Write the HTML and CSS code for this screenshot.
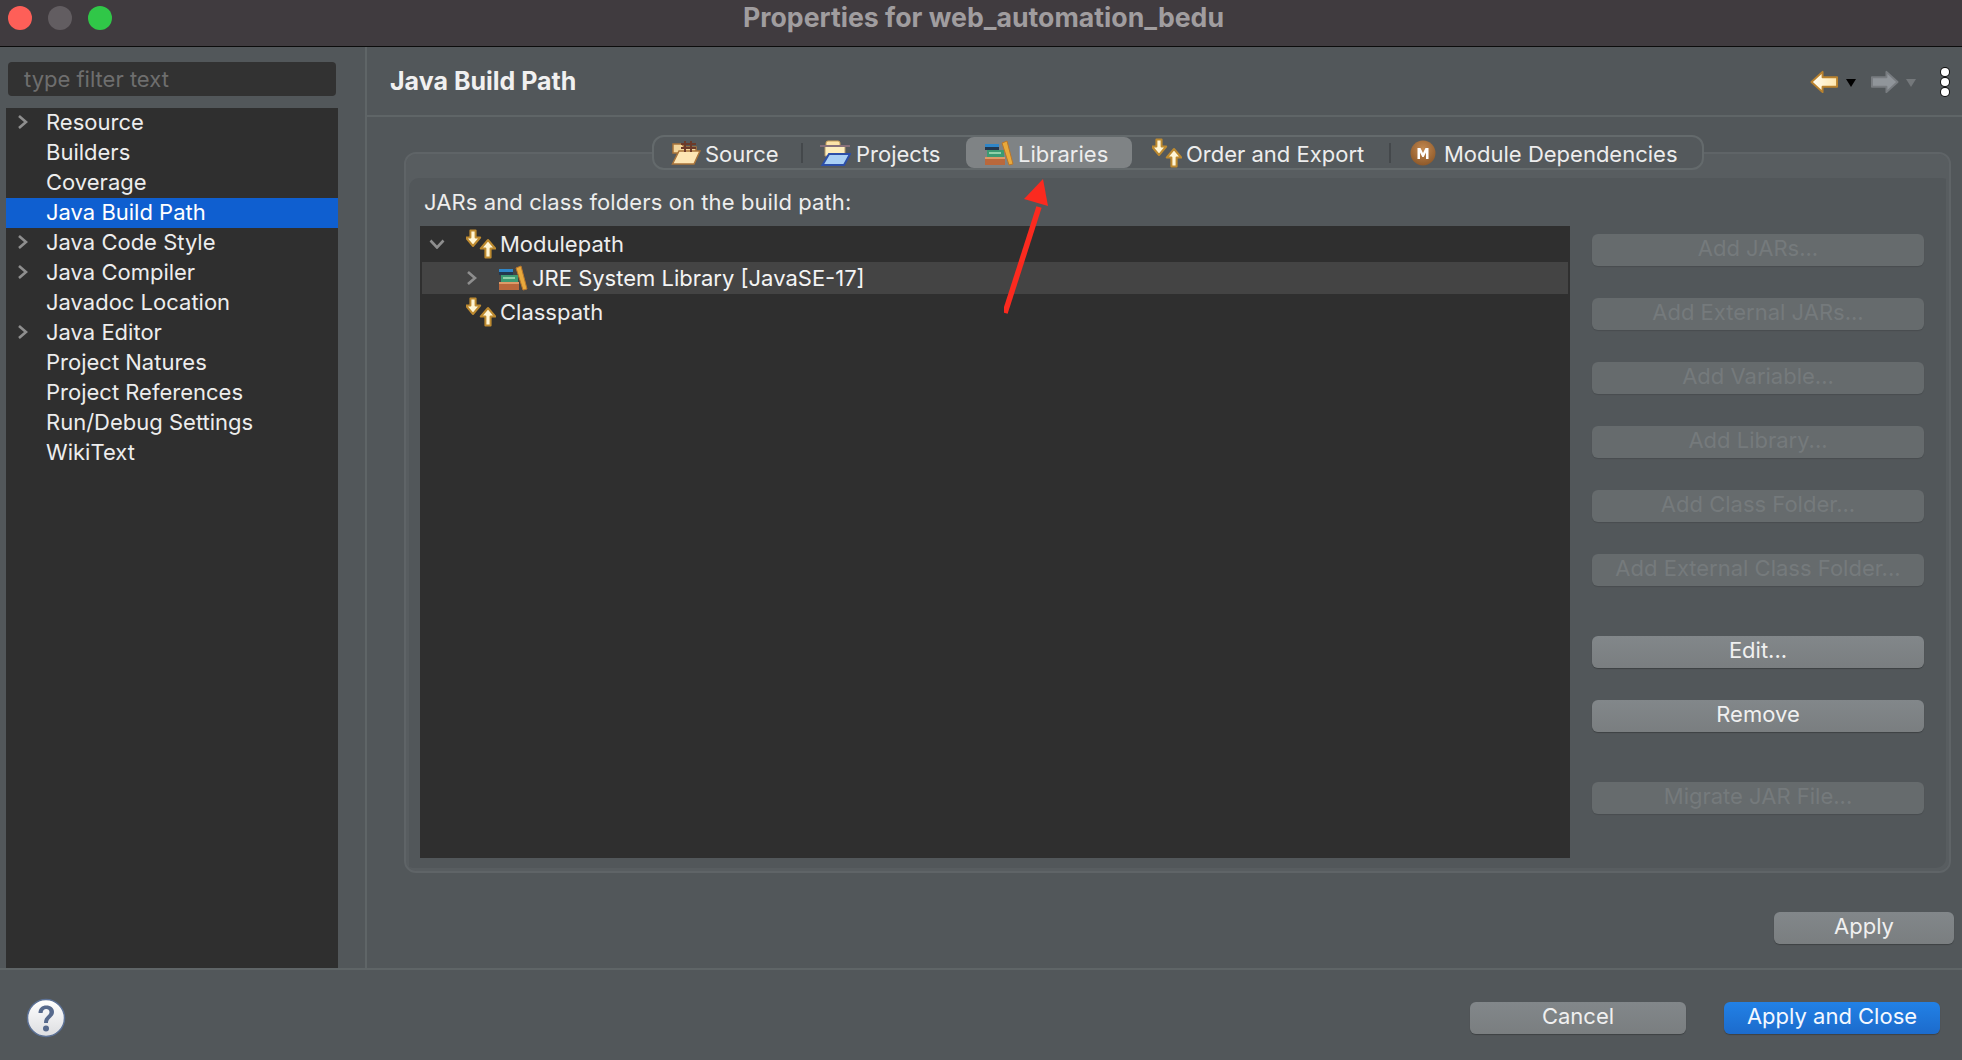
FILE: index.html
```html
<!DOCTYPE html>
<html lang="en">
<head>
<meta charset="utf-8">
<title>Properties for web_automation_bedu</title>
<link rel="stylesheet" href="styles.css">
</head>
<body>
<svg class="defs" width="0" height="0" aria-hidden="true">
  <defs>
    <linearGradient id="gBack" x1="0" y1="0" x2="1" y2="0"><stop offset="0" stop-color="#fffdf2"/><stop offset="1" stop-color="#ffe7ae"/></linearGradient>
    <linearGradient id="gHelp" x1="0" y1="0" x2="0" y2="1"><stop offset="0" stop-color="#ffffff"/><stop offset="1" stop-color="#dcdde0"/></linearGradient>
    <radialGradient id="gMaven" cx="0.5" cy="0.35" r="0.7"><stop offset="0" stop-color="#c48a52"/><stop offset="1" stop-color="#8a5526"/></radialGradient>
    <symbol id="updown" viewBox="0 0 30 30">
      <path d="M4.400 1.500h5.200v7h4.600l-7.200 8.500-7.200-8.500h4.600z" fill="#fff6d6" stroke="#bd8a30" stroke-width="2" stroke-linejoin="round"/>
      <path d="M19.400 28.500h5.200v-9h4.600l-7.200-8.500-7.200 8.500h4.600z" fill="#fff6d6" stroke="#bd8a30" stroke-width="2" stroke-linejoin="round"/>
    </symbol>
    <symbol id="books" viewBox="0 0 30 26">
      <rect x="1" y="17" width="20" height="8" fill="#b9683c"/>
      <rect x="1" y="17" width="20" height="2" fill="#dd9a68"/>
      <rect x="3" y="10" width="17" height="7" fill="#3c9a72"/>
      <rect x="5" y="12" width="12" height="2" fill="#8fd0a8"/>
      <rect x="1" y="4" width="14" height="6" fill="#23374e"/>
      <rect x="1" y="4" width="14" height="3" fill="#2f86c8"/>
      <path d="M18 3l5-2 6 23-4 1z" fill="#e8a93c" stroke="#b9762a" stroke-width="1"/>
    </symbol>
    <symbol id="help" viewBox="0 0 40 40">
      <circle cx="20" cy="20" r="18.500" fill="url(#gHelp)" stroke="#5c7195" stroke-width="1.500"/>
      <path d="M12.500 15c0-5 3.500-7.500 7.800-7.500 4.500 0 7.700 2.500 7.700 6.500 0 5.500-6 5.500-6 11h-4c0-7 5.500-7 5.500-11 0-1.800-1.500-3-3.300-3-2 0-3.500 1.300-3.600 4z" fill="#56698c"/>
      <circle cx="20" cy="30.500" r="3" fill="#56698c"/>
    </symbol>
  </defs>
</svg>

<div class="window">
  <header class="titlebar">
    <div class="lights">
      <span class="light light-red"></span>
      <span class="light light-off"></span>
      <span class="light light-green"></span>
    </div>
    <h1 class="title">Properties for web_automation_bedu</h1>
  </header>

  <div class="main">
    <aside class="sidebar">
      <div class="filter">type filter text</div>
      <ul class="nav">
        <li class="nav-row"><span class="twist"><svg class="chev" viewBox="0 0 12 16"><path d="M2 2l7 6-7 6"/></svg></span>Resource</li>
        <li class="nav-row"><span class="twist"></span>Builders</li>
        <li class="nav-row"><span class="twist"></span>Coverage</li>
        <li class="nav-row nav-selected"><span class="twist"></span>Java Build Path</li>
        <li class="nav-row"><span class="twist"><svg class="chev" viewBox="0 0 12 16"><path d="M2 2l7 6-7 6"/></svg></span>Java Code Style</li>
        <li class="nav-row"><span class="twist"><svg class="chev" viewBox="0 0 12 16"><path d="M2 2l7 6-7 6"/></svg></span>Java Compiler</li>
        <li class="nav-row"><span class="twist"></span>Javadoc Location</li>
        <li class="nav-row"><span class="twist"><svg class="chev" viewBox="0 0 12 16"><path d="M2 2l7 6-7 6"/></svg></span>Java Editor</li>
        <li class="nav-row"><span class="twist"></span>Project Natures</li>
        <li class="nav-row"><span class="twist"></span>Project References</li>
        <li class="nav-row"><span class="twist"></span>Run/Debug Settings</li>
        <li class="nav-row"><span class="twist"></span>WikiText</li>
      </ul>
    </aside>

    <section class="content">
      <div class="page-header">
        <h2 class="page-title">Java Build Path</h2>
        <div class="page-tools">
          <svg class="nav-arrow" viewBox="0 0 30 24"><path d="M1.500 12L13 1.500V7h15v10H13v5.500z" fill="url(#gBack)" stroke="#b9822e" stroke-width="2" stroke-linejoin="round"/></svg>
          <svg class="drop" viewBox="0 0 10 8"><path d="M0 0h10L5 8z" fill="#000"/></svg>
          <svg class="nav-arrow nav-fwd" viewBox="0 0 30 24"><path d="M28.500 12L17 1.500V7H2v10h15v5.500z" fill="#90959a" stroke="#787c80" stroke-width="2" stroke-linejoin="round"/></svg>
          <svg class="drop" viewBox="0 0 10 8"><path d="M0 0h10L5 8z" fill="#74787b"/></svg>
          <div class="dots"><span class="dot"></span><span class="dot"></span><span class="dot"></span></div>
        </div>
      </div>

      <div class="folder">
        <div class="tabs">
          <div class="tab tab-source">
            <svg class="tab-icon" viewBox="0 0 30 26"><path d="M2 4h9l2 3h12v6H2z" fill="#f2d59c" stroke="#a9743a" stroke-width="1.500"/><path d="M8 11h21l-6 13H1.500z" fill="#fde6b4" stroke="#a9743a" stroke-width="1.500"/><path d="M14 1v11M20 1v11M10 4h15M10 8h15" stroke="#6b3a2a" stroke-width="2" fill="none"/></svg>
            <span>Source</span>
          </div>
          <div class="tab tab-projects">
            <svg class="tab-icon" viewBox="0 0 31 26"><rect x="6" y="1" width="14" height="8" rx="2" fill="#fbe3a8" stroke="#c89f58"/><path d="M5 6h20v10H5z" fill="#fdeebc" stroke="#b59a6a"/><path d="M0 6h30" stroke="#86707a" stroke-width="2"/><path d="M9 14h21l-6 11H2.500z" fill="#a9d0f5" stroke="#2c4fa8" stroke-width="2"/></svg>
            <span>Projects</span>
          </div>
          <div class="tab tab-libraries tab-active">
            <svg class="tab-icon" viewBox="0 0 30 26"><use href="#books"/></svg>
            <span>Libraries</span>
          </div>
          <div class="tab tab-order">
            <svg class="tab-icon" viewBox="0 0 30 30"><use href="#updown"/></svg>
            <span>Order and Export</span>
          </div>
          <div class="tab tab-module">
            <svg class="tab-icon" viewBox="0 0 26 26"><circle cx="13" cy="13" r="12.500" fill="url(#gMaven)"/><path d="M7.500 8h3l2.500 5 2.500-5h3v11h-2.500v-6.500l-2.300 4.500h-1.400l-2.300-4.500V19H7.500z" fill="#fff"/></svg>
            <span>Module Dependencies</span>
          </div>
        </div>

        <p class="build-label">JARs and class folders on the build path:</p>

        <div class="panes">
          <div class="tree">
            <div class="tree-row">
              <svg class="tree-chev tree-chev-down" viewBox="0 0 16 10"><path d="M1.500 1.500l6.500 7 6.500-7"/></svg>
              <svg class="tree-icon" viewBox="0 0 30 30"><use href="#updown"/></svg>
              <span>Modulepath</span>
            </div>
            <div class="tree-row tree-row-selected">
              <svg class="tree-chev tree-chev-right" viewBox="0 0 12 16"><path d="M2 2l7 6-7 6"/></svg>
              <svg class="tree-icon-books" viewBox="0 0 30 26"><use href="#books"/></svg>
              <span>JRE System Library [JavaSE-17]</span>
            </div>
            <div class="tree-row">
              <span class="tree-spacer"></span>
              <svg class="tree-icon" viewBox="0 0 30 30"><use href="#updown"/></svg>
              <span>Classpath</span>
            </div>
          </div>

          <div class="side-buttons">
            <button class="btn btn-off">Add JARs...</button>
            <button class="btn btn-off">Add External JARs...</button>
            <button class="btn btn-off">Add Variable...</button>
            <button class="btn btn-off">Add Library...</button>
            <button class="btn btn-off">Add Class Folder...</button>
            <button class="btn btn-off">Add External Class Folder...</button>
            <button class="btn btn-group">Edit...</button>
            <button class="btn">Remove</button>
            <button class="btn btn-off btn-group">Migrate JAR File...</button>
          </div>
        </div>
      </div>

      <div class="apply-row"><button class="btn btn-apply">Apply</button></div>
    </section>
  </div>

  <footer class="footer">
    <svg class="help" viewBox="0 0 40 40"><use href="#help"/></svg>
    <div class="footer-actions">
      <button class="btn btn-wide">Cancel</button>
      <button class="btn btn-wide btn-primary">Apply and Close</button>
    </div>
  </footer>

  <svg class="annot" viewBox="0 0 60 140"><path d="M1 134L35 28" stroke="#fb2a1f" stroke-width="5.500" fill="none"/><path d="M39 0L20 20l24 7z" fill="#fb2a1f"/></svg>
</div>
</body>
</html>
```
FILE: styles.css
```css
* { box-sizing: border-box; }
html, body { margin: 0; padding: 0; height: 100%; }
body {
  font-family: Inter, "Noto Sans", "Liberation Sans", sans-serif;
  font-size: 22px;
  color: #eeeeee;
  background: #52575a;
  overflow: hidden;
}
.defs { position: absolute; }
.window {
  position: relative;
  display: flex;
  flex-direction: column;
  width: 1962px;
  height: 1060px;
  background: #52575a;
}

/* title bar */
.titlebar {
  position: relative;
  flex: 0 0 47px;
  display: flex;
  align-items: center;
  justify-content: center;
  background: #403b3f;
  border-bottom: 1px solid #0c0c0c;
  padding: 0 0 12px 5px;
}
.lights {
  position: absolute;
  left: 8px;
  top: 6px;
  display: flex;
  gap: 16px;
}
.light { width: 24px; height: 24px; border-radius: 50%; }
.light-red { background: #fe5f58; }
.light-off { background: #625d61; }
.light-green { background: #30c748; }
.title {
  margin: 0;
  font-size: 26.700px;
  font-weight: 700;
  color: #a09d9f;
  line-height: 28px;
}

.main { flex: 1; display: flex; min-height: 0; }

/* sidebar */
.sidebar {
  flex: 0 0 367px;
  display: flex;
  flex-direction: column;
  padding: 15px 0 0 6px;
  border-right: 2px solid #5f6567;
}
.filter {
  width: 328px;
  height: 34px;
  margin: 0 0 12px 2px;
  padding-left: 16px;
  line-height: 35px;
  background: #323232;
  border-radius: 4px;
  color: #6e6e6e;
}
.nav {
  flex: 1;
  width: 332px;
  margin: 0;
  padding: 0;
  list-style: none;
  background: #2f2f2f;
}
.nav-row {
  display: flex;
  align-items: center;
  height: 30px;
  padding-bottom: 2px;
  color: #ededed;
  white-space: nowrap;
}
.nav-selected { background: #0f5fd0; color: #ffffff; }
.twist { flex: 0 0 40px; display: flex; padding-left: 11px; }
.chev { width: 12px; height: 16px; }
.chev path, .tree-chev path { fill: none; stroke: #8e8e8e; stroke-width: 2.600; }

/* content */
.content { flex: 1; display: flex; flex-direction: column; min-width: 0; }
.page-header {
  flex: 0 0 70px;
  display: flex;
  align-items: center;
  justify-content: space-between;
  padding: 0 13px 0 23px;
  border-bottom: 2px solid #5f6567;
}
.page-title { margin: 0; font-size: 25px; font-weight: 700; color: #f0f0f0; }
.page-tools { display: flex; align-items: center; margin-top: 2px; }
.nav-arrow { width: 29px; height: 24px; }
.drop { width: 10px; height: 8px; margin: 2px 14px 0 7px; }
.dots { display: flex; flex-direction: column; gap: 2px; margin-left: 11px; }
.dot {
  width: 8px;
  height: 8px;
  border-radius: 50%;
  background: #ffffff;
  box-shadow: 0 0 0 1px #111111;
}

/* tab folder */
.folder {
  flex: 1;
  display: flex;
  flex-direction: column;
  min-height: 0;
  margin: 35px 11px 0 37px;
  padding: 0 13px 13px 14px;
  border: 2px solid #5f6467;
  border-radius: 12px;
  box-shadow: inset 3px 24px 0 #585d60, inset -3px -3px 0 #585d60;
}
.tabs {
  display: flex;
  align-self: flex-start;
  align-items: center;
  width: 1052px;
  height: 35px;
  margin: -19px 0 0 232px;
  background: #54595c;
  border: 2px solid #646a6c;
  border-radius: 12px;
}
.tab {
  display: flex;
  align-items: center;
  height: 31px;
  color: #ededed;
  white-space: nowrap;
  position: relative;
}
.tab span { margin-top: 2px; }
.tab-icon { flex: none; }
.tab-source { width: 149px; padding-left: 17px; gap: 4px; }
.tab-source .tab-icon { width: 30px; height: 26px; }
.tab-projects { width: 163px; padding-left: 17px; gap: 5px; }
.tab-projects .tab-icon { width: 31px; height: 26px; }
.tab-source::after, .tab-order::after {
  content: "";
  position: absolute;
  right: 0;
  top: 6px;
  width: 2px;
  height: 20px;
  background: #44484b;
}
.tab-libraries { width: 166px; padding-left: 18px; gap: 4px; }
.tab-libraries .tab-icon { width: 30px; height: 26px; }
.tab-active { background: #7f8385; border-radius: 8px; }
.tab-order { width: 259px; padding-left: 20px; gap: 4px; }
.tab-order .tab-icon { width: 30px; height: 30px; }
.tab-module { flex: 1; padding-left: 19px; gap: 8px; }
.tab-module .tab-icon { width: 26px; height: 26px; }

.build-label { margin: 17px 0 9px 4px; line-height: 30px; color: #ededed; letter-spacing: 0.1px; }
.panes { flex: 1; display: flex; min-height: 0; }

/* tree */
.tree {
  flex: 0 0 1150px;
  padding: 2px 2px 0;
  background: #2f2f2f;
}
.tree-row {
  display: flex;
  align-items: center;
  height: 32px;
  margin-bottom: 2px;
  color: #ededed;
  white-space: nowrap;
}
.tree-row-selected { background: #444444; color: #f4f4f4; }
.tree-chev-down { width: 16px; height: 10px; margin: 0 21px 0 7px; }
.tree-chev-right { width: 12px; height: 16px; margin: 0 20px 0 44px; }
.tree-spacer { width: 44px; }
.tree-icon { width: 30px; height: 30px; margin-right: 4px; flex: none; }
.tree-icon-books { width: 30px; height: 26px; margin-right: 4px; flex: none; }

/* buttons */
.side-buttons {
  flex: 0 0 332px;
  display: flex;
  flex-direction: column;
  gap: 32px;
  margin-left: 22px;
  padding-top: 8px;
}
.btn {
  display: block;
  height: 32px;
  padding: 0 0 4px;
  border: 0;
  border-radius: 6px;
  font-family: inherit;
  font-size: 22px;
  line-height: 28px;
  color: #f0f0f0;
  background: linear-gradient(#82878a, #7a7e80);
  box-shadow: 0 1px 1px rgba(0, 0, 0, 0.25);
}
.btn-off {
  color: #757a7c;
  background: #666b6d;
  box-shadow: 0 1px 1px rgba(0, 0, 0, 0.12);
}
.btn-group { margin-top: 18px; }
.apply-row {
  flex: 0 0 95px;
  display: flex;
  justify-content: flex-end;
  padding: 39px 8px 0 0;
}
.btn-apply { width: 180px; }

/* footer */
.footer {
  flex: 0 0 92px;
  display: flex;
  align-items: flex-start;
  justify-content: space-between;
  border-top: 2px solid #5f6567;
  padding: 32px 22px 0 26px;
}
.help { width: 40px; height: 40px; margin-top: -4px; }
.footer-actions { display: flex; gap: 38px; }
.btn-wide { width: 216px; }
.btn-primary { background: linear-gradient(#2281e6, #1c6bcc); color: #f4f8ff; }

/* annotation drawn over the screenshot */
.annot {
  position: absolute;
  left: 1004px;
  top: 179px;
  width: 60px;
  height: 140px;
}
```
